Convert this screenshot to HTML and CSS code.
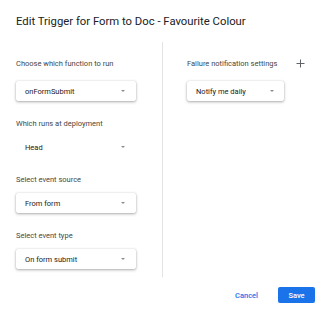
FILE: index.html
```html
<!DOCTYPE html>
<html>
<head>
<meta charset="utf-8">
<link rel="stylesheet" href="styles.css">
</head>
<body>
<div class="dialog">
  <h1 class="title">Edit Trigger for Form to Doc - Favourite Colour</h1>
  <div class="columns">
    <div class="col col-left">
      <div class="field field-first">
        <div class="label">Choose which function to run</div>
        <div class="select raised"><span class="value">onFormSubmit</span><span class="caret"></span></div>
      </div>
      <div class="field">
        <div class="label">Which runs at deployment</div>
        <div class="select"><span class="value">Head</span><span class="caret"></span></div>
      </div>
      <div class="field">
        <div class="label">Select event source</div>
        <div class="select raised"><span class="value">From form</span><span class="caret"></span></div>
      </div>
      <div class="field">
        <div class="label">Select event type</div>
        <div class="select raised"><span class="value">On form submit</span><span class="caret"></span></div>
      </div>
    </div>
    <div class="col col-right">
      <div class="field field-first">
        <div class="label-row">
          <span class="label">Failure notification settings</span>
          <svg class="plus" width="9" height="9" viewBox="0 0 9 9"><path d="M4.5 0.5v8M0.5 4.5h8" stroke="#5f6368" stroke-width="1" fill="none"/></svg>
        </div>
        <div class="select raised select-narrow"><span class="value">Notify me daily</span><span class="caret"></span></div>
      </div>
    </div>
  </div>
  <div class="actions">
    <button class="btn btn-text">Cancel</button>
    <button class="btn btn-primary">Save</button>
  </div>
</div>
</body>
</html>
```

FILE: styles.css
```css
html, body {
  margin: 0;
  padding: 0;
  background: #ffffff;
}
body {
  font-family: Roboto, "Liberation Sans", Arial, sans-serif;
  color: #202124;
}
.dialog {
  width: 329px;
  height: 320px;
  box-sizing: border-box;
  padding: 14px 14px 0 16px;
}
.title {
  margin: 0 0 12px 0;
  font-size: 11.3px;
  line-height: 16px;
  font-weight: 400;
  color: #202124;
}
.columns {
  display: flex;
}
.col {
  padding-top: 17px;
  padding-bottom: 8px;
}
.col-left {
  width: 146px;
  border-right: 1px solid #e3e3e3;
}
.col-right {
  flex: 1;
  padding-left: 24px;
  padding-right: 10px;
}
.field {
  margin-top: 18px;
}
.field-first {
  margin-top: 0;
}
.label {
  font-size: 7.5px;
  line-height: 10px;
  color: #444746;
  margin-bottom: 8px;
  display: block;
}
.field-first .label {
  margin-bottom: 12px;
}
.label-row {
  display: flex;
  align-items: center;
  justify-content: space-between;
}
.label-row .label {
  margin-bottom: 12px;
}
.plus {
  margin-bottom: 12px;
  margin-top: -2px;
}
.select {
  width: 120px;
  height: 20px;
  box-sizing: border-box;
  display: flex;
  align-items: center;
  justify-content: space-between;
  padding: 0 11px 0 9px;
  font-size: 7.5px;
  color: #202124;
  border-radius: 2px;
  background: #fff;
}
.select-narrow {
  width: 97px;
  padding-right: 10px;
}
.raised {
  box-shadow: 0 1px 3px rgba(0, 0, 0, 0.32), 0 0 1px rgba(0, 0, 0, 0.2);
}
.caret {
  width: 0;
  height: 0;
  border-left: 2.5px solid transparent;
  border-right: 2.5px solid transparent;
  border-top: 2.5px solid #8a8d91;
}
.actions {
  display: flex;
  justify-content: flex-end;
  align-items: center;
  gap: 10px;
  margin-top: 10px;
}
.btn {
  font-family: Roboto, "Liberation Sans", Arial, sans-serif;
  font-size: 7.5px;
  font-weight: 500;
  height: 16px;
  border: none;
  border-radius: 2px;
  padding: 0 10px;
  margin: 0;
  cursor: pointer;
}
.btn-text {
  background: transparent;
  color: #1a73e8;
}
.btn-primary {
  background: #1a73e8;
  color: #ffffff;
  width: 37px;
}
```
